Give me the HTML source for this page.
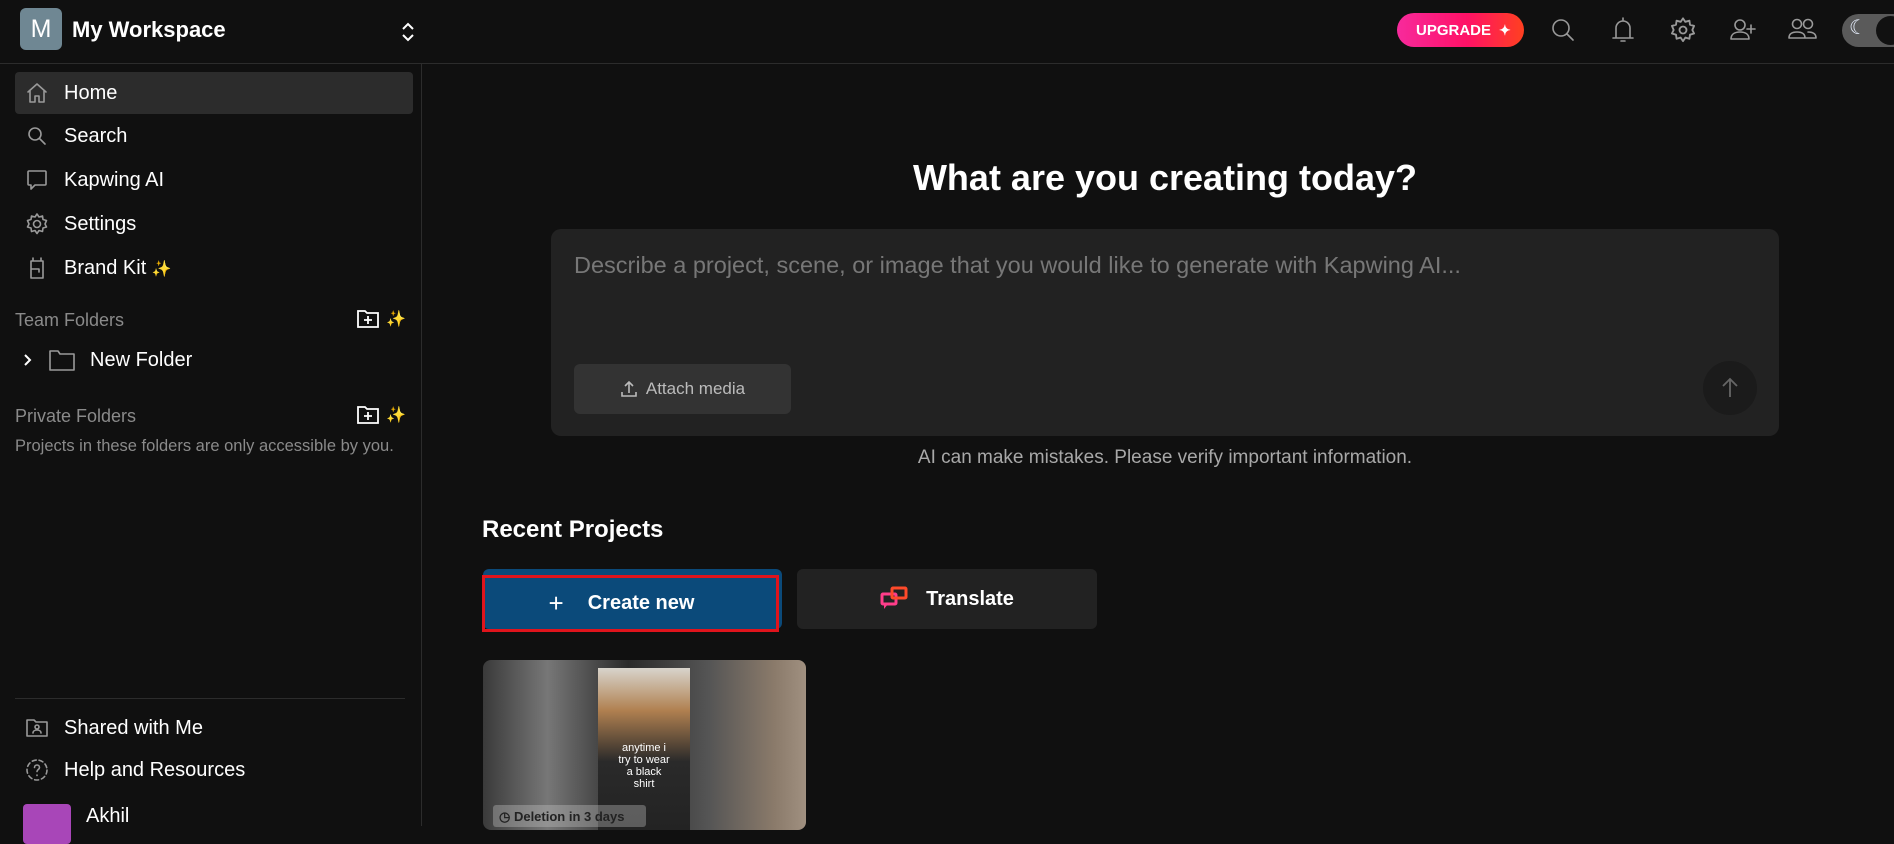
<!DOCTYPE html>
<html><head><meta charset="utf-8"><style>
*{box-sizing:border-box;margin:0;padding:0}
body{width:1894px;height:826px;background:#101010;font-family:"Liberation Sans",sans-serif;color:#fff;overflow:hidden;position:relative}
.abs{position:absolute}
.hdr{left:0;top:0;width:1894px;height:64px;border-bottom:1px solid #2c2c2c}
.side{left:0;top:64px;width:422px;height:762px;border-right:1px solid #2c2c2c}
.item{position:absolute;left:15px;width:398px;height:42px;display:flex;align-items:center;font-size:20px;color:#fff}
.item svg{position:absolute;left:10px}
.item span{position:absolute;left:49px}
.sec{position:absolute;left:15px;font-size:18px;color:#8a8a8a}
.ico{stroke:#999;fill:none;stroke-width:1.6;stroke-linecap:round;stroke-linejoin:round}
</style></head><body>
<div class="abs hdr"></div>
<div class="abs" style="left:20px;top:8px;width:42px;height:42px;background:#6f8793;border-radius:6px;font-size:25px;display:flex;align-items:center;justify-content:center;color:#fff">M</div>
<div class="abs" style="left:72px;top:17px;font-size:22px;font-weight:bold">My Workspace</div>
<svg class="abs" style="left:399px;top:20px" width="18" height="24" viewBox="0 0 18 24"><path d="M4 9l5-5 5 5M4 15l5 5 5-5" stroke="#fff" stroke-width="2" fill="none"/></svg>

<div class="abs" style="left:1397px;top:13px;width:127px;height:34px;border-radius:17px;background:linear-gradient(90deg,#f72a9c,#ff1166 55%,#ff4020);font-size:15px;font-weight:bold;display:flex;align-items:center;padding-left:19px">UPGRADE <span style="margin-left:8px;font-size:14px">✦</span></div>
<svg class="abs" style="left:1549px;top:16px" width="28" height="28" viewBox="0 0 28 28"><circle cx="12" cy="12" r="8" class="ico" stroke-width="2.2"/><path d="M18 18l6 6" class="ico" stroke-width="2.2"/></svg>
<svg class="abs" style="left:1609px;top:15px" width="28" height="30" viewBox="0 0 28 30"><path d="M14 3v2M7 22V13a7 7 0 0114 0v9M4 23h20M12 26h4" class="ico" stroke-width="2"/></svg>
<svg class="abs" style="left:1669px;top:16px" width="28" height="28" viewBox="0 0 24 24"><circle cx="12" cy="12" r="3" class="ico" stroke-width="1.8"/><path d="M12 2l2 3 3.5-1 .5 3.5 3.5 1-1.5 3.5 1.5 3-3.5 1-.5 3.5-3.5-1-2 3-2-3-3.5 1-.5-3.5-3.5-1L4 12 2.5 8.5l3.5-1L6.5 4 10 5z" class="ico" stroke-width="1.6"/></svg>
<svg class="abs" style="left:1729px;top:16px" width="30" height="28" viewBox="0 0 30 28"><circle cx="11" cy="9" r="5" class="ico" stroke-width="1.8"/><path d="M2 23c0-5 4-7 9-7s9 2 9 7zM22 9v8M18 13h8" class="ico" stroke-width="1.8"/></svg>
<svg class="abs" style="left:1788px;top:16px" width="30" height="28" viewBox="0 0 30 28"><circle cx="9" cy="8" r="4.5" class="ico" stroke-width="1.8"/><circle cx="20" cy="8" r="4.5" class="ico" stroke-width="1.8"/><path d="M1 22c0-4 3-6 8-6s8 2 8 6zM12 22h16c0-4-3-6-8-6" class="ico" stroke-width="1.8"/></svg>
<div class="abs" style="left:1842px;top:14px;width:70px;height:33px;border-radius:17px;background:#5a5a5a"></div>
<div class="abs" style="left:1876px;top:16px;width:29px;height:29px;border-radius:50%;background:#111"></div>
<div class="abs" style="left:1849px;top:15px;font-size:20px;color:#e8f0ff">☾</div>

<div class="abs side"></div>
<div class="item" style="top:72px;background:#2c2c2c;border-radius:4px"><svg width="24" height="24" viewBox="0 0 24 24"><path d="M3 11l9-8 9 8M5 9v12h5v-6h4v6h5V9" class="ico"/></svg><span>Home</span></div>
<div class="item" style="top:115px"><svg width="24" height="24" viewBox="0 0 24 24"><circle cx="10" cy="10" r="6" class="ico" stroke-width="2"/><path d="M15 15l5 5" class="ico" stroke-width="2"/></svg><span>Search</span></div>
<div class="item" style="top:159px"><svg width="24" height="24" viewBox="0 0 24 24"><path d="M4 3h16a1 1 0 011 1v12a1 1 0 01-1 1H10l-4 4v-4H4a1 1 0 01-1-1V4a1 1 0 011-1z" class="ico"/></svg><span>Kapwing AI</span></div>
<div class="item" style="top:203px"><svg width="24" height="24" viewBox="0 0 24 24"><circle cx="12" cy="12" r="3.5" class="ico"/><path d="M12 2l2 3 3.5-1 .5 3.5 3.5 1-1.5 3.5 1.5 3-3.5 1-.5 3.5-3.5-1-2 3-2-3-3.5 1-.5-3.5-3.5-1L4 12 2.5 8.5l3.5-1L6.5 4 10 5z" class="ico"/></svg><span>Settings</span></div>
<div class="item" style="top:247px"><svg width="24" height="24" viewBox="0 0 24 24"><path d="M6 5h12v17H6zM8 5V2M16 5V2M6 13h8v3" class="ico" stroke-width="1.8"/></svg><span>Brand Kit <span style="position:static;color:#f5c518;font-size:16px">✨</span></span></div>

<div class="sec" style="top:310px">Team Folders</div>
<svg class="abs" style="left:356px;top:309px" width="24" height="20" viewBox="0 0 24 20"><path d="M2 2h7l2 2h11v14H2z" stroke="#fff" stroke-width="1.8" fill="none"/><path d="M12 7v8M8 11h8" stroke="#fff" stroke-width="1.8"/></svg>
<div class="abs" style="left:386px;top:309px;font-size:16px;color:#f5c518">✨</div>
<svg class="abs" style="left:22px;top:352px" width="12" height="16" viewBox="0 0 12 16"><path d="M3 3l5 5-5 5" stroke="#fff" stroke-width="2" fill="none"/></svg>
<svg class="abs" style="left:49px;top:349px" width="26" height="22" viewBox="0 0 26 22"><path d="M1 2h8l2 3h14v16H1z" class="ico" stroke-width="1.6"/></svg>
<div class="abs" style="left:90px;top:349px;font-size:20px">New Folder</div>

<div class="sec" style="top:406px">Private Folders</div>
<svg class="abs" style="left:356px;top:405px" width="24" height="20" viewBox="0 0 24 20"><path d="M2 2h7l2 2h11v14H2z" stroke="#fff" stroke-width="1.8" fill="none"/><path d="M12 7v8M8 11h8" stroke="#fff" stroke-width="1.8"/></svg>
<div class="abs" style="left:386px;top:405px;font-size:16px;color:#f5c518">✨</div>
<div class="abs" style="left:15px;top:437px;font-size:16.5px;color:#8a8a8a">Projects in these folders are only accessible by you.</div>

<div class="abs" style="left:15px;top:698px;width:390px;height:1px;background:#2c2c2c"></div>
<div class="item" style="top:707px"><svg width="24" height="24" viewBox="0 0 24 24"><path d="M2 4h7l2 2h11v14H2z" class="ico" stroke-width="1.8"/><circle cx="12" cy="11" r="2" class="ico"/><path d="M8 17c0-2 2-3 4-3s4 1 4 3" class="ico"/></svg><span>Shared with Me</span></div>
<div class="item" style="top:749px"><svg width="24" height="24" viewBox="0 0 24 24"><circle cx="12" cy="12" r="10" class="ico" stroke-dasharray="4 3" stroke-width="1.8"/><path d="M9.5 9.5a2.5 2.5 0 115 0c0 2-2.5 2-2.5 4M12 17v.5" class="ico"/></svg><span>Help and Resources</span></div>
<div class="abs" style="left:23px;top:804px;width:48px;height:40px;background:#a846b8;border-radius:4px"></div>
<div class="abs" style="left:86px;top:805px;font-size:20px">Akhil</div>

<div class="abs" style="left:551px;top:157px;width:1228px;text-align:center;font-size:36px;font-weight:bold">What are you creating today?</div>
<div class="abs" style="left:551px;top:229px;width:1228px;height:207px;background:#222;border-radius:10px"></div>
<div class="abs" style="left:574px;top:252px;font-size:23.5px;color:#777">Describe a project, scene, or image that you would like to generate with Kapwing AI...</div>
<div class="abs" style="left:574px;top:364px;width:217px;height:50px;background:#333;border-radius:6px;font-size:17px;color:#bbb;display:flex;align-items:center;justify-content:center"><svg width="18" height="20" viewBox="0 0 18 20" style="margin-right:8px"><path d="M9 14V3M5 7l4-4 4 4M2 13v4h14v-4" stroke="#bbb" stroke-width="1.6" fill="none"/></svg>Attach media</div>
<div class="abs" style="left:1703px;top:361px;width:54px;height:54px;border-radius:50%;background:#1b1b1b"></div>
<svg class="abs" style="left:1720px;top:376px" width="20" height="24" viewBox="0 0 20 24"><path d="M10 21V3M3 10l7-7 7 7" stroke="#666" stroke-width="1.8" fill="none"/></svg>
<div class="abs" style="left:551px;top:447px;width:1228px;text-align:center;font-size:19px;color:#a8a8a8">AI can make mistakes. Please verify important information.</div>

<div class="abs" style="left:482px;top:516px;font-size:24px;font-weight:bold">Recent Projects</div>
<div class="abs" style="left:483px;top:569px;width:299px;height:60px;background:#0b4a7a;border-radius:6px"></div>
<div class="abs" style="left:482px;top:575px;width:297px;height:57px;border:3px solid #e0141c"></div>
<div class="abs" style="left:483px;top:575px;width:297px;height:57px;display:flex;align-items:center;justify-content:center;font-size:20px;font-weight:bold"><span style="font-size:26px;font-weight:normal;margin-right:24px;margin-left:-20px">+</span>Create new</div>
<div class="abs" style="left:797px;top:569px;width:300px;height:60px;background:#222;border-radius:6px;display:flex;align-items:center;justify-content:center;font-size:20px;font-weight:bold"><svg width="30" height="26" viewBox="0 0 30 26" style="margin-right:16px"><rect x="2" y="8" width="14" height="10" rx="1" stroke="#ff3d8a" stroke-width="3" fill="none"/><rect x="12" y="2" width="14" height="10" rx="1" stroke="#ff4a2a" stroke-width="3" fill="none"/><path d="M4 18v5l4-5" fill="#ff3d8a"/></svg>Translate</div>

<div class="abs" style="left:483px;top:660px;width:323px;height:170px;border-radius:8px;overflow:hidden;background:linear-gradient(90deg,#3a3a3a,#777 20%,#2a2a2a 45%,#555 70%,#8a7a6a 90%,#a09080)">
<div style="position:absolute;left:115px;top:8px;width:92px;height:170px;background:linear-gradient(180deg,#d8d4cc 0,#b08050 25%,#2a2a2a 55%,#222 100%)"></div>
<div style="position:absolute;left:115px;top:82px;width:92px;text-align:center;font-size:11px;line-height:12px;color:#fff">anytime i<br>try to wear<br>a black<br>shirt</div>
<div style="position:absolute;left:10px;top:145px;width:153px;height:22px;background:rgba(200,200,200,.35);border-radius:3px;font-size:13px;color:#222;padding:4px 6px;font-weight:bold">◷ Deletion in 3 days</div>
</div>
</body></html>
